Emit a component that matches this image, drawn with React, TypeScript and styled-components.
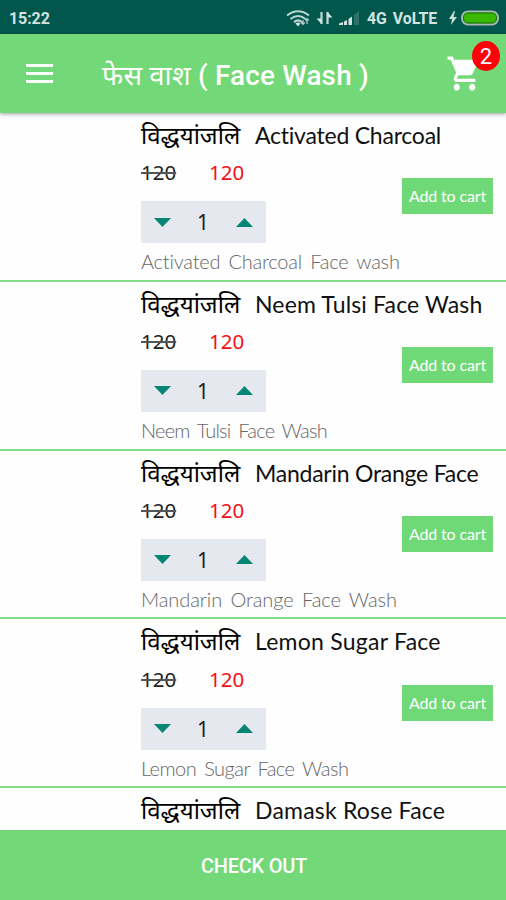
import React from "react";
import styled, { createGlobalStyle } from "styled-components";

const Global = createGlobalStyle`
  * { box-sizing: border-box; }
  body { margin: 0; background: #fff; overflow: hidden; }
  button { border: 0; margin: 0; padding: 0; background: none; font: inherit; color: inherit; }
`;

const Screen = styled.div`
  display: flex;
  flex-direction: column;
  width: 506px;
  height: 900px;
  overflow: hidden;
  background: #fefefe;
  font-family: Roboto, "Noto Sans", sans-serif;
`;

const StatusBar = styled.div`
  flex: 0 0 34px;
  display: flex;
  align-items: center;
  padding: 2px 6px 0 9px;
  background: #02574c;
  color: #d3e3e0;
  font-size: 16px;
  font-weight: 700;
`;

const Clock = styled.span`
  flex: 1;
  letter-spacing: -0.1px;
`;

const StatusIcons = styled.div`
  display: flex;
  align-items: center;
  svg { display: block; flex: none; }
`;

const Network = styled.span`
  width: 73px;
  margin: 0 8px 0 6px;
  white-space: nowrap;
  font-size: 15.8px;
  word-spacing: 2px;
`;

const Toolbar = styled.header`
  position: relative;
  z-index: 1;
  flex: 0 0 79px;
  display: flex;
  align-items: center;
  padding: 0 24px 0 26px;
  background: #73d978;
  color: #fff;
  box-shadow: 0 1px 4px rgba(0, 0, 0, 0.4);
`;

const MenuButton = styled.button`
  display: grid;
  gap: 5px;
  width: 27px;
  span { height: 3px; background: #fff; }
`;

const Title = styled.h1`
  flex: 1;
  margin: 5px 0 0 49px;
  font-size: 27.8px;
  line-height: 36px;
  font-weight: 500;
  letter-spacing: 0.22px;
  white-space: nowrap;
`;

const TitleHindi = styled.span`
  font-size: 27.5px;
  font-weight: 400;
`;

const CartButton = styled.button`
  position: relative;
  width: 36px;
  height: 41px;
  svg { display: block; }
`;

const Badge = styled.span`
  position: absolute;
  top: -12px;
  left: 26px;
  width: 28px;
  height: 30px;
  border-radius: 50%;
  background: #fb0309;
  font-size: 22px;
  line-height: 31px;
  text-align: center;
`;

const List = styled.main`
  flex: 1;
  min-height: 0;
  overflow: hidden;
`;

const Product = styled.article`
  height: 168.8px;
  padding: 0 13px 0 141px;
  border-bottom: 2px solid #83dc87;
  overflow: hidden;
`;

const Heading = styled.h2`
  display: flex;
  align-items: baseline;
  height: 45.2px;
  margin: 0;
  font-weight: 400;
  line-height: 43px;
  color: #111;
  white-space: nowrap;
`;

const Brand = styled.span`
  width: 114px;
  font-family: "Noto Sans", "Lohit Devanagari", sans-serif;
  font-size: 24px;
  color: #000;
`;

const Name = styled.span<{ $spacing: number }>`
  font-family: Lato, sans-serif;
  font-size: 23px;
  letter-spacing: ${(p) => p.$spacing}px;
`;

const Purchase = styled.div`
  display: flex;
  justify-content: space-between;
  height: 85px;
`;

const Prices = styled.div`
  display: flex;
  height: 28px;
  margin-bottom: 15px;
  font-family: "Noto Sans", sans-serif;
  font-size: 20.5px;
  line-height: 28px;
`;

const OldPrice = styled.span`
  width: 68px;
  color: #222;
  span { text-decoration: line-through; text-decoration-thickness: 1.5px; text-decoration-color: #555; }
`;

const Price = styled.span`
  color: #f50f14;
`;

const Stepper = styled.div`
  display: grid;
  grid-template-columns: 42px 40px 42px;
  align-items: center;
  justify-items: center;
  width: 125px;
  height: 42px;
  background: #e5e8ef;
  font-family: "Noto Sans", sans-serif;
  font-size: 21px;
  color: #222;
  svg { display: block; }
`;

const AddButton = styled.button`
  width: 91px;
  height: 36px;
  margin-top: 20px;
  background: #70d977;
  color: #fff;
  font-family: Lato, sans-serif;
  font-size: 16px;
  letter-spacing: -0.15px;
  line-height: 36px;
  white-space: nowrap;
`;

const Description = styled.p<{ $spacing: number }>`
  margin: 3px 0 0;
  font-family: Lato, sans-serif;
  font-size: 20px;
  font-weight: 300;
  line-height: 30px;
  letter-spacing: ${(p) => p.$spacing}px;
  word-spacing: 3px;
  color: #666;
  white-space: nowrap;
`;

const CheckoutButton = styled.button`
  flex: 0 0 70px;
  width: 100%;
  padding: 2px 0 0 2px;
  background: #73d978;
  color: #fff;
  font-size: 20px;
  letter-spacing: -0.25px;
  font-weight: 500;
`;

type Item = { name: string; nameSpacing: number; description?: string; descriptionSpacing?: number };

const items: Item[] = [
  { name: "Activated Charcoal", nameSpacing: -0.23, description: "Activated Charcoal Face wash", descriptionSpacing: -0.22 },
  { name: "Neem Tulsi Face Wash", nameSpacing: 0.15, description: "Neem Tulsi Face Wash", descriptionSpacing: -0.76 },
  { name: "Mandarin Orange Face", nameSpacing: -0.25, description: "Mandarin Orange Face Wash", descriptionSpacing: -0.08 },
  { name: "Lemon Sugar Face", nameSpacing: 0.25, description: "Lemon Sugar Face Wash", descriptionSpacing: -0.52 },
  { name: "Damask Rose Face", nameSpacing: 0.2 },
];

const Arrow = ({ up }: { up?: boolean }) => (
  <svg width="17" height="9" viewBox="0 0 17 9">
    <path d={up ? "M0 9 8.5 0 17 9z" : "M0 0h17L8.5 9z"} fill="#078574" />
  </svg>
);

const DeviceIcons = () => (
  <svg width="75" height="22" viewBox="0 0 75 22" fill="none" stroke="#b9d5d0">
    <g strokeWidth="2">
      <path d="M1 8.5Q12 0 23 8.5M4.5 12Q12 6 19.5 12M8 15.3Q12 11.5 16 15.3" />
    </g>
    <path d="M12 19.5l-2.5-3q2.5-1.8 5 0z" fill="#d3e3e0" stroke="none" />
    <path d="M17 17v-4m-1.7 2.5L17 17.3l1.7-1.8M21 12v5m-1.7-3.5L21 11.7l1.7 1.8" strokeWidth="1.2" />
    <path d="M35.5 5v12M41.500 17V5" strokeWidth="2.3" />
    <path d="M36 17.500l-5.500-6h5zM41 4.500l5.500 6h-5z" fill="#d3e3e0" stroke="none" />
    <g fill="#d3e3e0" stroke="none">
      <path d="M53 18v-1.500l4-1.500v3zM58 18v-3.500l3-1.500v5zM62.500 18v-6l3.500-2.500v8.500z" />
      <path d="M68 18V8l5-4v14z" fill="#2d7169" />
    </g>
  </svg>
);

const Battery = () => (
  <svg width="52" height="18" viewBox="0 0 52 18">
    <path d="M6 2 1 10h3l-1 6 6-8H5.500l1.500-6z" fill="#c7ded9" />
    <rect x="14" y="2.500" width="36" height="13" rx="6" fill="#38b900" stroke="#a6b8b1" strokeWidth="2" />
    <rect x="15.500" y="4" width="33" height="10" rx="4.500" fill="none" stroke="#176b19" />
  </svg>
);

const CartIcon = () => (
  <svg width="37" height="41" viewBox="0 0 24 24" preserveAspectRatio="none" fill="#fff">
    <path d="M7 18c-1.100 0-1.990.9-1.990 2S5.900 22 7 22s2-.9 2-2-.9-2-2-2zM1 2v2h2l3.600 7.590-1.350 2.450c-.16.28-.25.61-.25.960 0 1.100.9 2 2 2h12v-2H7.420c-.14 0-.25-.11-.25-.25l.03-.12.9-1.630h7.450c.75 0 1.410-.41 1.750-1.030l3.580-6.490A1 1 0 0 0 20 4H5.210l-.94-2H1zm16 16c-1.100 0-1.990.9-1.990 2s.89 2 1.990 2 2-.9 2-2-.9-2-2-2z" />
  </svg>
);

const ProductRow = ({ item }: { item: Item }) => (
  <Product>
    <Heading>
      <Brand>विद्धयांजलि</Brand>
      <Name $spacing={item.nameSpacing}>{item.name}</Name>
    </Heading>
    {item.description && (
      <>
        <Purchase>
          <div>
            <Prices>
              <OldPrice><span>120</span></OldPrice>
              <Price>120</Price>
            </Prices>
            <Stepper>
              <button aria-label="Decrease"><Arrow /></button>
              <span>1</span>
              <button aria-label="Increase"><Arrow up /></button>
            </Stepper>
          </div>
          <AddButton>Add to cart</AddButton>
        </Purchase>
        <Description $spacing={item.descriptionSpacing ?? 0}>{item.description}</Description>
      </>
    )}
  </Product>
);

export default function App() {
  return (
    <Screen>
      <Global />
      <StatusBar>
        <Clock>15:22</Clock>
        <StatusIcons>
          <DeviceIcons />
          <Network>4G VoLTE</Network>
          <Battery />
        </StatusIcons>
      </StatusBar>
      <Toolbar>
        <MenuButton aria-label="Menu"><span /><span /><span /></MenuButton>
        <Title><TitleHindi>फेस वाश</TitleHindi> ( Face Wash )</Title>
        <CartButton aria-label="Cart"><CartIcon /><Badge>2</Badge></CartButton>
      </Toolbar>
      <List>
        {items.map((item) => <ProductRow key={item.name} item={item} />)}
      </List>
      <CheckoutButton>CHECK OUT</CheckoutButton>
    </Screen>
  );
}
